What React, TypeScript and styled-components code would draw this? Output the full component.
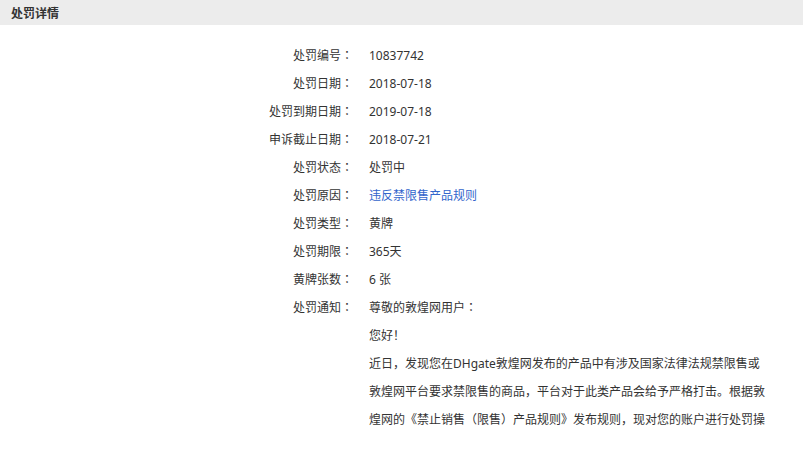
import React from 'react';
import styled, { createGlobalStyle } from 'styled-components';

const GlobalStyle = createGlobalStyle`
  html, body {
    margin: 0;
    padding: 0;
    background: #ffffff;
  }
  body {
    font-family: "Noto Sans", "Noto Sans CJK SC", sans-serif;
    font-size: 12px;
    color: #333333;
  }
`;

const Page = styled.div`
  width: 803px;
  min-height: 449px;
  background: #ffffff;
  overflow: hidden;
`;

const Header = styled.div`
  height: 25px;
  display: flex;
  align-items: center;
  padding: 0 11px;
  background: #ececec;
`;

const Title = styled.h3`
  margin: 0;
  font-size: 12px;
  font-weight: 700;
  color: #333333;
`;

const DetailGrid = styled.dl`
  display: grid;
  grid-template-columns: 353px 398px;
  column-gap: 16px;
  margin: 0;
  padding-top: 17px;
  line-height: 28px;
`;

const Label = styled.dt`
  margin: 0;
  text-align: right;
  white-space: nowrap;
  color: #333333;
`;

// centred full-width colon, as in the original page font
const Colon = styled.span`
  font-family: "Noto Sans CJK JP", sans-serif;
  line-height: 1;
`;

const Value = styled.dd`
  margin: 0;
  color: #333333;
`;

const RuleLink = styled.a`
  color: #3366cc;
  text-decoration: none;
`;

const Para = styled.p`
  margin: 0;
`;

const rows: { label: string; value: React.ReactNode }[] = [
  { label: '处罚编号', value: '10837742' },
  { label: '处罚日期', value: '2018-07-18' },
  { label: '处罚到期日期', value: '2019-07-18' },
  { label: '申诉截止日期', value: '2018-07-21' },
  { label: '处罚状态', value: '处罚中' },
  { label: '处罚原因', value: <RuleLink href="#">违反禁限售产品规则</RuleLink> },
  { label: '处罚类型', value: '黄牌' },
  { label: '处罚期限', value: '365天' },
  { label: '黄牌张数', value: '6 张' },
];

export default function App() {
  return (
    <Page>
      <GlobalStyle />
      <Header>
        <Title>处罚详情</Title>
      </Header>
      <DetailGrid>
        {rows.map((r) => (
          <React.Fragment key={r.label}>
            <Label>
              {r.label}
              <Colon>：</Colon>
            </Label>
            <Value>{r.value}</Value>
          </React.Fragment>
        ))}
        <Label>
          处罚通知<Colon>：</Colon>
        </Label>
        <Value>
          <Para>
            尊敬的敦煌网用户<Colon>：</Colon>
          </Para>
          <Para>您好！</Para>
          <Para>
            近日，发现您在DHgate敦煌网发布的产品中有涉及国家法律法规禁限售或敦煌网平台要求禁限售的商品，平台对于此类产品会给予严格打击。根据敦煌网的《禁止销售（限售）产品规则》发布规则，现对您的账户进行处罚操
          </Para>
        </Value>
      </DetailGrid>
    </Page>
  );
}
